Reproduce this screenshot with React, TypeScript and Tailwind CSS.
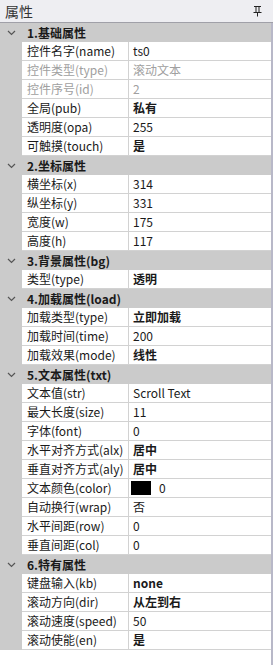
import React from 'react';

type Row = { label: string; value: string; bold?: boolean; disabled?: boolean; swatch?: boolean };
type Section = { title: string; rows: Row[] };

const sections: Section[] = [
  {
    title: '1.基础属性',
    rows: [
      { label: '控件名字(name)', value: 'ts0' },
      { label: '控件类型(type)', value: '滚动文本', disabled: true },
      { label: '控件序号(id)', value: '2', disabled: true },
      { label: '全局(pub)', value: '私有', bold: true },
      { label: '透明度(opa)', value: '255' },
      { label: '可触摸(touch)', value: '是', bold: true },
    ],
  },
  {
    title: '2.坐标属性',
    rows: [
      { label: '横坐标(x)', value: '314' },
      { label: '纵坐标(y)', value: '331' },
      { label: '宽度(w)', value: '175' },
      { label: '高度(h)', value: '117' },
    ],
  },
  {
    title: '3.背景属性(bg)',
    rows: [{ label: '类型(type)', value: '透明', bold: true }],
  },
  {
    title: '4.加载属性(load)',
    rows: [
      { label: '加载类型(type)', value: '立即加载', bold: true },
      { label: '加载时间(time)', value: '200' },
      { label: '加载效果(mode)', value: '线性', bold: true },
    ],
  },
  {
    title: '5.文本属性(txt)',
    rows: [
      { label: '文本值(str)', value: 'Scroll Text' },
      { label: '最大长度(size)', value: '11' },
      { label: '字体(font)', value: '0' },
      { label: '水平对齐方式(alx)', value: '居中', bold: true },
      { label: '垂直对齐方式(aly)', value: '居中', bold: true },
      { label: '文本颜色(color)', value: '0', swatch: true },
      { label: '自动换行(wrap)', value: '否' },
      { label: '水平间距(row)', value: '0' },
      { label: '垂直间距(col)', value: '0' },
    ],
  },
  {
    title: '6.特有属性',
    rows: [
      { label: '键盘输入(kb)', value: 'none', bold: true },
      { label: '滚动方向(dir)', value: '从左到右', bold: true },
      { label: '滚动速度(speed)', value: '50' },
      { label: '滚动使能(en)', value: '是', bold: true },
    ],
  },
];

const Chevron = () => (
  <svg width="9" height="6" viewBox="0 0 9 6" className="ml-[7px]">
    <path d="M1 1 L4.5 4.5 L8 1" fill="none" stroke="#555" strokeWidth="1.2" />
  </svg>
);

const Pin = () => (
  <svg width="9" height="12" viewBox="0 0 9 12">
    <path d="M1 1.5 H8" stroke="#222" strokeWidth="1" />
    <rect x="2.5" y="1.5" width="1" height="5.5" fill="#222" />
    <rect x="5.5" y="1.5" width="1" height="5.5" fill="#222" />
    <path d="M0.5 7.5 H8.5" stroke="#222" strokeWidth="1" />
    <path d="M4.5 8 V11.5" stroke="#222" strokeWidth="1" />
  </svg>
);

const App: React.FC = () => {
  return (
    <div
      className="w-[273px] h-[665px] bg-white text-[12px] text-[#1a1a1a] overflow-hidden"
      style={{ fontFamily: '"Noto Sans CJK SC", "Noto Sans", sans-serif' }}
    >
      <div className="h-[23px] bg-[#eeeef2] flex items-center justify-between pl-[5px] pr-[11px] border-b border-[#a0a0a8]">
        <span className="text-[14px] text-[#333]">属性</span>
        <Pin />
      </div>
      <div className="w-[273px] border-r-2 border-[#b8b8c8] h-[642px]">
        {sections.map((section) => (
          <div key={section.title}>
            <div className="h-[19px] bg-[#cbcbcb] flex items-center">
              <Chevron />
              <span className="ml-[11px] font-bold leading-none">{section.title}</span>
            </div>
            {section.rows.map((row) => (
              <div key={row.label} className="h-[19px] flex">
                <div className="w-[22px] bg-[#cbcbcb]" />
                <div
                  className={`w-[107px] border-r border-b border-[#d2d2d2] pl-[5px] flex items-center whitespace-nowrap leading-none ${
                    row.disabled ? 'text-[#a0a0a0]' : ''
                  }`}
                >
                  {row.label}
                </div>
                <div
                  className={`flex-1 border-b border-[#d2d2d2] pl-[4px] flex items-center whitespace-nowrap leading-none ${
                    row.disabled ? 'text-[#a0a0a0]' : ''
                  } ${row.bold ? 'font-bold' : ''}`}
                >
                  {row.swatch && <span className="w-[20px] h-[14px] bg-black mr-[8px] -ml-[2px]" />}
                  {row.value}
                </div>
              </div>
            ))}
          </div>
        ))}
      </div>
    </div>
  );
};

export default App;
